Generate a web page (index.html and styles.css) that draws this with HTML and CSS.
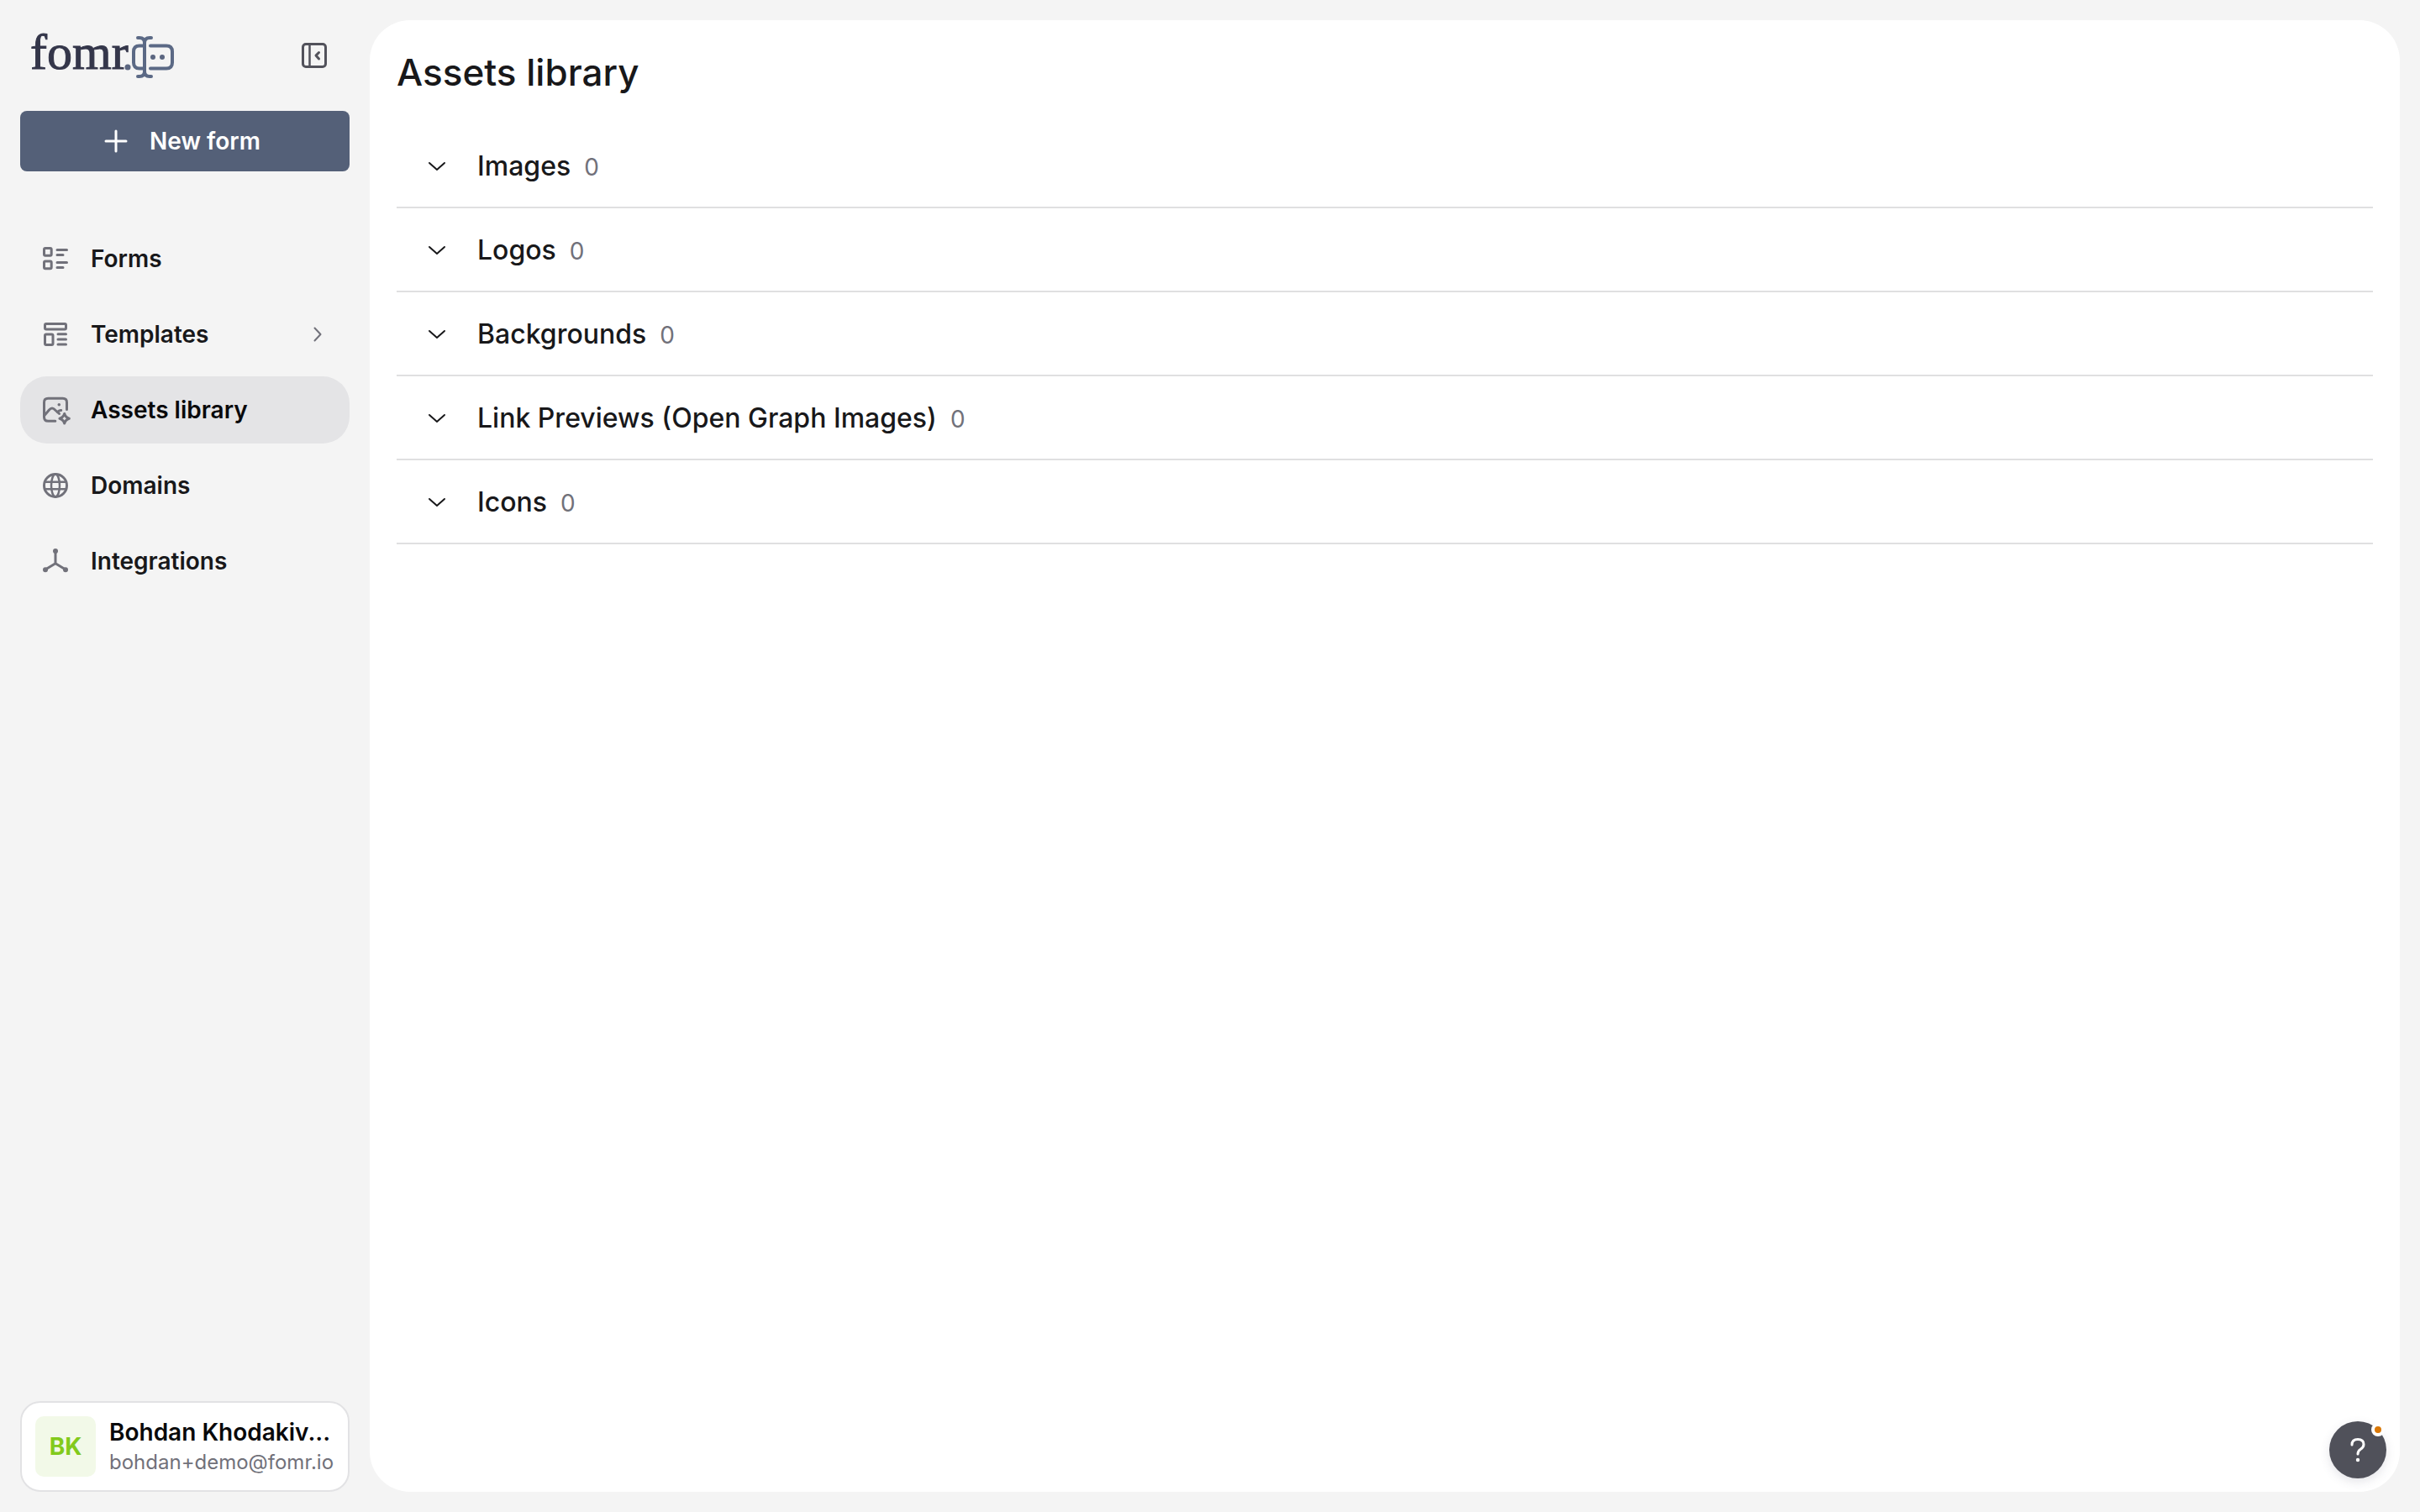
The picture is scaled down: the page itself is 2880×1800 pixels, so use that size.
FILE: index.html
```
<!DOCTYPE html>
<html lang="en">
<head>
  <meta charset="UTF-8">
  <meta name="viewport" content="width=device-width, initial-scale=1">
  <title>Assets library</title>
  <link rel="stylesheet" href="styles.css">
</head>
<body>
  <div class="app">
    <aside class="sidebar">
      <div class="sidebar-header">
        <a href="#" class="logo" aria-label="fomr">
          <svg width="180" height="84" viewBox="-4 -10 180 84">
            <text class="logo-text" x="0" y="48">fomr</text>
            <circle class="logo-dot" cx="116" cy="46" r="3.500"/>
            <g class="logo-mark">
              <path d="M128 11h2q6 0 6 6v34q0 6-6 6h-2M144 11h-2q-6 0-6 6v34q0 6 6 6h2"/>
              <path d="M136 20.500h-6q-7 0-7 7v13q0 7 7 7h6"/>
              <path d="M143 20.500h19q7 0 7 7v13q0 7-7 7h-19"/>
            </g>
            <circle class="logo-dot" cx="146" cy="34" r="3"/>
            <circle class="logo-dot" cx="157" cy="34" r="3"/>
          </svg>
        </a>
        <button class="collapse-button" aria-label="Collapse sidebar">
          <svg class="icon" viewBox="0 0 36 36">
            <rect x="4.500" y="4.500" width="27" height="27" rx="3.500"/>
            <path d="M12.500 5v26" stroke-width="2.500"/>
            <path d="M23.500 14.500L20 18l3.500 4"/>
          </svg>
        </button>
      </div>

      <button class="new-form">
        <svg width="28" height="28" viewBox="0 0 28 28"><path d="M14 2v24M2 14h24"/></svg>
        New form
      </button>

      <nav class="nav">
        <a href="#" class="nav-item">
          <svg class="icon" viewBox="0 0 36 36">
            <rect x="4.500" y="5.500" width="8.700" height="8.700" rx="1.500"/>
            <rect x="4.500" y="21" width="8.700" height="8.700" rx="1.500"/>
            <path d="M20 7.500h11.500M20 13.500h7M20 22.500h11.500M20 28.500h7"/>
          </svg>
          <span>Forms</span>
        </a>
        <a href="#" class="nav-item">
          <svg class="icon" viewBox="0 0 36 36">
            <rect x="5.500" y="5.500" width="25" height="6.500" rx="1.500"/>
            <rect x="5.500" y="18" width="9.500" height="12.500" rx="1.500"/>
            <path d="M21 17.700h9.500M21 24h9.500M21 30h9.500"/>
          </svg>
          <span>Templates</span>
          <svg class="icon nav-arrow" viewBox="0 0 36 36"><path d="M14.500 10.500l7 7.500-7 7.500"/></svg>
        </a>
        <a href="#" class="nav-item active">
          <svg class="icon" viewBox="0 0 36 36">
            <path d="M31.500 17.500V9q0-4.800-4.800-4.800H9.300q-4.800 0-4.800 4.800v17.400q0 4.800 4.800 4.800h8.500"/>
            <path d="M4.500 25l6-7q3.500-4 7 0l5 4.500"/>
            <path d="M20.500 20.500q2-2.500 4.200-2"/>
            <circle class="fill" cx="22.300" cy="11.700" r="1.800"/>
            <path d="M28.700 22.500q1.300 4.500 5.600 5.800-4.300 1.300-5.600 5.700-1.300-4.400-5.700-5.700 4.400-1.300 5.700-5.800z"/>
          </svg>
          <span>Assets library</span>
        </a>
        <a href="#" class="nav-item">
          <svg class="icon" viewBox="0 0 36 36">
            <circle cx="18" cy="18" r="13.500"/>
            <ellipse cx="18" cy="18" rx="5" ry="13.500" stroke-width="2.500"/>
            <path d="M5 13.800h26M5 22.300h26" stroke-width="2.500"/>
          </svg>
          <span>Domains</span>
        </a>
        <a href="#" class="nav-item">
          <svg class="icon" viewBox="0 0 36 36">
            <path d="M18 6v14.700L6 28M18 20.700L30 28"/>
            <circle class="fill" cx="18" cy="6" r="3"/>
            <circle class="fill" cx="6" cy="28.300" r="3"/>
            <circle class="fill" cx="30" cy="28.300" r="3"/>
          </svg>
          <span>Integrations</span>
        </a>
      </nav>

      <button class="user-card">
        <span class="avatar">BK</span>
        <span class="user-info">
          <span class="user-name">Bohdan Khodakiv...</span>
          <span class="user-email">bohdan+demo@fomr.io</span>
        </span>
      </button>
    </aside>

    <main class="content">
      <h1 class="page-title">Assets library</h1>

      <div class="asset-list">
        <button class="asset-row" aria-expanded="false">
          <svg class="icon" viewBox="0 0 36 36"><path d="M9 15l9 8 9-8"/></svg>
          <span class="asset-name">Images <span class="asset-count">0</span></span>
        </button>
        <button class="asset-row" aria-expanded="false">
          <svg class="icon" viewBox="0 0 36 36"><path d="M9 15l9 8 9-8"/></svg>
          <span class="asset-name">Logos <span class="asset-count">0</span></span>
        </button>
        <button class="asset-row" aria-expanded="false">
          <svg class="icon" viewBox="0 0 36 36"><path d="M9 15l9 8 9-8"/></svg>
          <span class="asset-name">Backgrounds <span class="asset-count">0</span></span>
        </button>
        <button class="asset-row" aria-expanded="false">
          <svg class="icon" viewBox="0 0 36 36"><path d="M9 15l9 8 9-8"/></svg>
          <span class="asset-name">Link Previews (Open Graph Images) <span class="asset-count">0</span></span>
        </button>
        <button class="asset-row" aria-expanded="false">
          <svg class="icon" viewBox="0 0 36 36"><path d="M9 15l9 8 9-8"/></svg>
          <span class="asset-name">Icons <span class="asset-count">0</span></span>
        </button>
      </div>
    </main>
  </div>

  <button class="help-button" aria-label="Help">
    <svg width="36" height="36" viewBox="0 0 36 36">
      <path d="M11 12q0-6.500 7-6.500t7 6q0 3.500-4 6-3 2-3 5.500"/>
      <circle cx="18" cy="30" r="2.200"/>
    </svg>
    <span class="help-badge"></span>
  </button>
</body>
</html>
```

FILE: styles.css
```
* {
  box-sizing: border-box;
}

body {
  margin: 0;
  background-color: #f4f4f4;
  color: #18181a;
  font-family: Inter, "Liberation Sans", sans-serif;
  font-size: 28px;
}

button {
  border: none;
  background: none;
  padding: 0;
  color: inherit;
  font: inherit;
  cursor: pointer;
}

a {
  color: inherit;
  text-decoration: none;
}

svg {
  display: block;
  flex-shrink: 0;
}

.app {
  display: flex;
  min-height: 100vh;
  padding: 24px;
  gap: 24px;
}

.icon {
  width: 36px;
  height: 36px;
  fill: none;
  stroke: currentColor;
  stroke-width: 3;
  stroke-linecap: round;
  stroke-linejoin: round;
}

.icon .fill {
  fill: currentColor;
  stroke: none;
}

/* Sidebar */
.sidebar {
  display: flex;
  flex-direction: column;
  flex-shrink: 0;
  width: 392px;
}

.sidebar-header {
  display: flex;
  align-items: center;
  justify-content: space-between;
  height: 84px;
  padding: 0 18px 0 8px;
  margin-bottom: 24px;
}

.logo-text {
  font-family: "Liberation Serif", serif;
  font-size: 60px;
  fill: #34364a;
  stroke: #34364a;
  stroke-width: 1;
}

.logo-dot {
  fill: #5b6680;
}

.logo-mark {
  fill: none;
  stroke: #5b6985;
  stroke-width: 4;
  stroke-linecap: round;
}

.collapse-button {
  display: flex;
  align-items: center;
  justify-content: center;
  width: 48px;
  height: 48px;
  color: #52525b;
}

.new-form {
  display: flex;
  align-items: center;
  justify-content: center;
  gap: 26px;
  height: 72px;
  padding-right: 6px;
  border-radius: 8px;
  background-color: #546078;
  color: #fff;
  font-weight: 600;
}

.new-form svg {
  fill: none;
  stroke: currentColor;
  stroke-width: 3;
  stroke-linecap: round;
}

.nav {
  display: flex;
  flex-direction: column;
  gap: 10px;
  margin-top: 64px;
}

.nav-item {
  display: flex;
  align-items: center;
  gap: 24px;
  height: 80px;
  padding: 0 20px 0 24px;
  border-radius: 32px;
  font-weight: 600;
}

.nav-item.active {
  background-color: #e4e4e6;
  color: #09090b;
}

.nav-item .icon {
  color: #71717a;
}

.nav-item .nav-arrow {
  margin-left: auto;
  stroke-width: 2;
}

.user-card {
  display: flex;
  align-items: center;
  gap: 16px;
  height: 108px;
  margin-top: auto;
  padding: 0 16px;
  border: 2px solid #e2e2e4;
  border-radius: 24px;
  background-color: #fff;
  text-align: left;
}

.avatar {
  display: flex;
  align-items: center;
  justify-content: center;
  flex-shrink: 0;
  width: 72px;
  height: 72px;
  border-radius: 10px;
  background-color: #f2f9e8;
  color: #82ca1c;
  font-weight: 700;
}

.user-info {
  display: flex;
  flex-direction: column;
}

.user-name {
  color: #09090b;
  font-weight: 600;
  line-height: 38px;
}

.user-email {
  color: #71717a;
  font-size: 24px;
  line-height: 34px;
}

/* Main panel */
.content {
  flex: 1;
  min-width: 0;
  padding: 32px;
  border-radius: 48px;
  background-color: #fff;
}

.page-title {
  margin: 0 0 32px;
  font-size: 44px;
  font-weight: 500;
  line-height: 60px;
}

.asset-list {
  display: flex;
  flex-direction: column;
}

.asset-row {
  display: flex;
  align-items: center;
  height: 100px;
  padding: 0 30px;
  border-bottom: 2px solid #e0e0e1;
}

.asset-row .icon {
  margin-right: 30px;
  stroke-width: 2;
}

.asset-name {
  display: flex;
  align-items: baseline;
  gap: 16px;
  font-size: 32px;
  font-weight: 500;
}

.asset-count {
  color: #71717a;
  font-size: 28px;
  font-weight: 400;
}

/* Help button floats over the panel */
.help-button {
  position: fixed;
  right: 40px;
  bottom: 40px;
  display: flex;
  align-items: center;
  justify-content: center;
  width: 68px;
  height: 68px;
  border-radius: 50%;
  background-color: #50515a;
  color: #fff;
  box-shadow: 0 4px 12px rgba(80, 80, 110, 0.15);
}

.help-button path {
  fill: none;
  stroke: currentColor;
  stroke-width: 3;
  stroke-linecap: round;
}

.help-button circle {
  fill: currentColor;
}

.help-badge {
  position: absolute;
  top: 2px;
  right: 2px;
  width: 16px;
  height: 16px;
  border: 4px solid #fff;
  border-radius: 50%;
  background-color: #d97706;
}
```
